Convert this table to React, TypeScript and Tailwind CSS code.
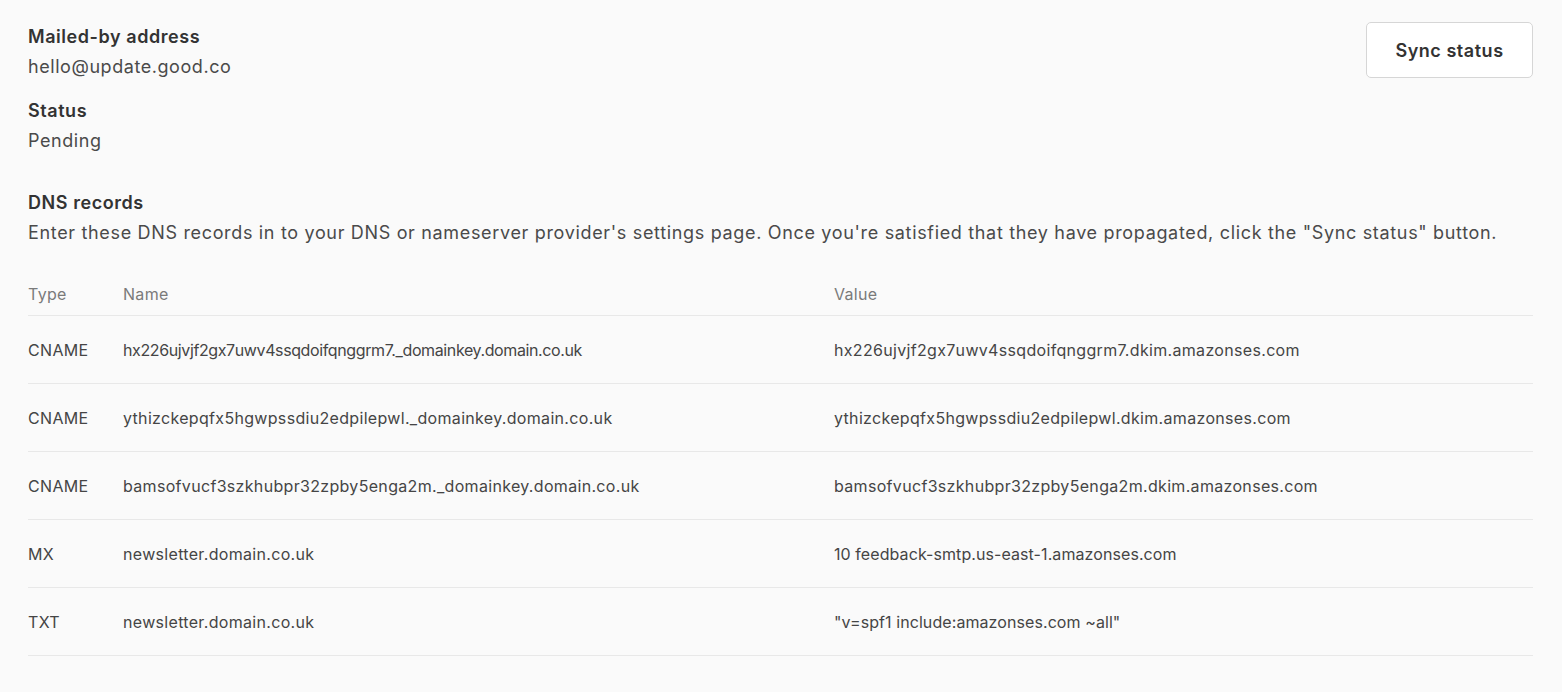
import React from "react";

const records = [
  { type: "CNAME", name: "hx226ujvjf2gx7uwv4ssqdoifqnggrm7._domainkey.domain.co.uk", value: "hx226ujvjf2gx7uwv4ssqdoifqnggrm7.dkim.amazonses.com", tight: true },
  { type: "CNAME", name: "ythizckepqfx5hgwpssdiu2edpilepwl._domainkey.domain.co.uk", value: "ythizckepqfx5hgwpssdiu2edpilepwl.dkim.amazonses.com", tight: false },
  { type: "CNAME", name: "bamsofvucf3szkhubpr32zpby5enga2m._domainkey.domain.co.uk", value: "bamsofvucf3szkhubpr32zpby5enga2m.dkim.amazonses.com", tight: false },
  { type: "MX", name: "newsletter.domain.co.uk", value: "10 feedback-smtp.us-east-1.amazonses.com", tight: false },
  { type: "TXT", name: "newsletter.domain.co.uk", value: '"v=spf1 include:amazonses.com ~all"', tight: false },
];

export default function App() {
  return (
    <div className="min-h-[692px] w-full bg-[#fafafa] px-[28px] pt-[22px] font-['Inter',sans-serif] text-[#444] tracking-[0.035em]">
      <div className="flex items-start justify-between">
        <div className="flex flex-col gap-[14px]">
          <div>
            <div className="text-[18px] leading-[30px] font-semibold text-[#333]">Mailed-by address</div>
            <div className="text-[18px] leading-[30px] text-[#4a4a4a]">hello@update.good.co</div>
          </div>
          <div>
            <div className="text-[18px] leading-[30px] font-semibold text-[#333]">Status</div>
            <div className="text-[18px] leading-[30px] text-[#4a4a4a]">Pending</div>
          </div>
        </div>
        <button className="mr-[1px] h-[56px] w-[167px] rounded-[5px] border border-[#d6d6d6] bg-white text-[18px] font-semibold text-[#333] tracking-[0.03em]">
          Sync status
        </button>
      </div>

      <div className="mt-[32px]">
        <div className="text-[18px] leading-[30px] font-semibold text-[#333]">DNS records</div>
        <div className="text-[18px] leading-[30px] text-[#4a4a4a] tracking-[0.037em]">
          Enter these DNS records in to your DNS or nameserver provider's settings page. Once you're satisfied that they have propagated, click the "Sync status" button.
        </div>
      </div>

      <div className="mt-[31px] mr-[1px] text-[16px] tracking-[0.02em]">
        <div className="grid grid-cols-[95px_711px_1fr] h-[37px] border-b border-[#e8e8e8] text-[#7a7a7a] leading-[30px]">
          <div>Type</div>
          <div>Name</div>
          <div>Value</div>
        </div>
        {records.map((r, i) => (
          <div key={i} className="grid grid-cols-[95px_711px_1fr] h-[68px] items-center border-b border-[#e8e8e8] text-[#454545]">
            <div>{r.type}</div>
            <div className={r.tight ? "tracking-[-0.024em]" : ""}>{r.name}</div>
            <div className={i >= 3 ? "tracking-[0.005em]" : ""}>{r.value}</div>
          </div>
        ))}
      </div>
    </div>
  );
}
